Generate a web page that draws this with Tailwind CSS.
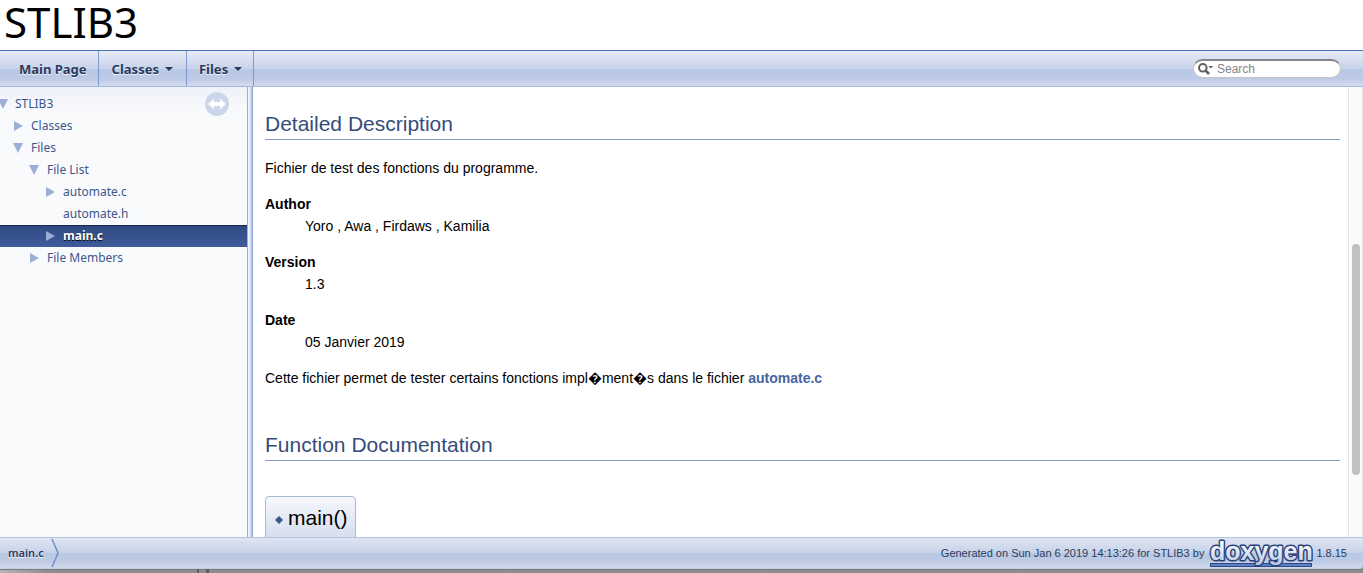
<!DOCTYPE html>
<html lang="en">
<head>
<meta charset="utf-8">
<title>STLIB3: main.c File Reference</title>
<script src="https://cdn.jsdelivr.net/npm/@tailwindcss/browser@4"></script>
</head>
<body class="flex h-screen flex-col overflow-hidden bg-white font-['Liberation_Sans',sans-serif] text-sm/[22px] text-black">
<header class="h-[50px] shrink-0 px-1">
  <h1 class="font-['Noto_Sans',sans-serif] text-[42px]/[44px]">STLIB3</h1>
</header>

<nav class="flex h-[37px] shrink-0 items-stretch border-t border-b border-t-[#4e6fb5] border-b-[#a6b9dc] bg-[linear-gradient(to_bottom,#e6eaf5,#c8d3ea_50%,#b9c8e5_53%,#bccae6_78%,#d3dbef)] font-['Noto_Sans',sans-serif] text-[13px] font-bold text-[#283a5d] [text-shadow:0_1px_1px_rgba(255,255,255,.9)]" aria-label="Main">
  <a href="#" class="flex items-center border-r border-[#7d9acb] pl-[19px] pr-[11px]">Main Page</a>
  <a href="#" class="flex items-center gap-1.5 border-r border-[#7d9acb] px-[13px]">Classes
    <svg class="h-1 w-2" viewBox="0 0 8 4" fill="#283a5d"><path d="M0 0h8L4 4z"/></svg></a>
  <a href="#" class="flex items-center gap-1.5 border-r border-[#7d9acb] pr-[11px] pl-3">Files
    <svg class="h-1 w-2" viewBox="0 0 8 4" fill="#283a5d"><path d="M0 0h8L4 4z"/></svg></a>
  <form class="my-auto mr-[22px] ml-auto flex h-[19px] w-[148px] items-center rounded-full border border-[#c4c4c4] border-t-2 border-t-[#858585] bg-white pl-1" onsubmit="return false">
    <svg class="h-3 w-4 shrink-0" viewBox="0 0 16 12" fill="none" stroke="#5f5f5f"><circle cx="4.8" cy="4.8" r="3.8" stroke-width="2"/><path d="M7.4 7.4L11 11" stroke-width="2.6"/><path d="M10.5 3h4.5L12.8 5.5z" fill="#5f5f5f" stroke="none"/></svg>
    <input type="text" aria-label="Search" placeholder="Search" class="ml-[3px] w-full min-w-0 bg-transparent font-['Liberation_Sans',sans-serif] text-xs/[15px] font-normal outline-none placeholder:text-[#858585]">
  </form>
</nav>

<div class="flex min-h-0 flex-1">
  <aside class="relative w-[247px] shrink-0 overflow-hidden bg-[#f9fafc] bg-linear-to-b from-[#eef1f9] to-[#f9fafc] to-[24px] pt-[6px] font-['Noto_Sans',sans-serif] text-xs/[22px] text-[#3d578c]">
    <button type="button" aria-label="Synchronise navigation" class="absolute top-[5px] right-[18px] size-6">
      <svg viewBox="0 0 24 24"><circle cx="12" cy="12" r="12" fill="#cbd6eb"/><path d="M3 12l6-5.5V10h6V6.500L21 12l-6 5.500V14H9v3.500z" fill="#fff"/></svg>
    </button>
    <ul>
      <li><a href="#" class="flex h-[22px] items-center gap-[7px]"><svg class="-ml-[2px] size-[10px]" viewBox="0 0 10 10" fill="#9caed8"><path d="M0 0h10L5 10z"/></svg>STLIB3</a></li>
      <li><a href="#" class="flex h-[22px] items-center gap-2 pl-[13px]"><svg class="size-[10px]" viewBox="0 0 10 10" fill="#9caed8"><path d="M1 0v10l9-5z"/></svg>Classes</a></li>
      <li><a href="#" class="flex h-[22px] items-center gap-2 pl-[13px]"><svg class="size-[10px]" viewBox="0 0 10 10" fill="#9caed8"><path d="M0 0h10L5 10z"/></svg>Files</a></li>
      <li><a href="#" class="flex h-[22px] items-center gap-2 pl-[29px]"><svg class="size-[10px]" viewBox="0 0 10 10" fill="#9caed8"><path d="M0 0h10L5 10z"/></svg>File List</a></li>
      <li><a href="#" class="flex h-[22px] items-center gap-2 pl-[45px]"><svg class="size-[10px]" viewBox="0 0 10 10" fill="#9caed8"><path d="M1 0v10l9-5z"/></svg>automate.c</a></li>
      <li><a href="#" class="flex h-[22px] items-center pl-[63px]">automate.h</a></li>
      <li><a href="#" aria-current="page" class="flex h-[22px] items-center gap-2 bg-linear-to-b from-[#2f4880] to-[#3f5c9c] pl-[45px] font-bold text-white shadow-[inset_0_1px_0_#1c2a4a] [text-shadow:0_1px_1px_#000]"><svg class="size-[10px]" viewBox="0 0 10 10" fill="#9caed8"><path d="M1 0v10l9-5z"/></svg>main.c</a></li>
      <li><a href="#" class="flex h-[22px] items-center gap-2 pl-[29px]"><svg class="size-[10px]" viewBox="0 0 10 10" fill="#9caed8"><path d="M1 0v10l9-5z"/></svg>File Members</a></li>
    </ul>
  </aside>
  <div class="w-[6px] shrink-0 border-x border-l-[#9caed8] border-r-[#8fa6d6] bg-linear-to-r from-white to-[#b4c3e2]"></div>

  <main class="min-w-0 flex-1 overflow-hidden pt-[25px] pr-2 pl-3">
    <h2 class="border-b border-[#879ecb] pb-[3px] text-[21px]/[24px] text-[#354c7b]">Detailed Description</h2>
    <p class="mt-[17px]">Fichier de test des fonctions du programme.</p>
    <dl class="mt-[14px]"><dt class="font-bold">Author</dt><dd class="ml-10">Yoro , Awa , Firdaws , Kamilia</dd></dl>
    <dl class="mt-[14px]"><dt class="font-bold">Version</dt><dd class="ml-10">1.3</dd></dl>
    <dl class="mt-[14px]"><dt class="font-bold">Date</dt><dd class="ml-10">05 Janvier 2019</dd></dl>
    <p class="mt-[14px]">Cette fichier permet de tester certains fonctions impl�ment�s dans le fichier <a href="#" class="font-bold text-[#4665a2]">automate.c</a></p>
    <h2 class="mt-11 border-b border-[#879ecb] pb-[3px] text-[21px]/[24px] text-[#354c7b]">Function Documentation</h2>
    <h3 class="mt-[35px] flex h-14 w-fit items-start gap-[5px] rounded-t border border-[#a8b8d9] bg-linear-to-b from-[#f6f8fc] to-[#d6deef] to-[40px] pr-[7px] pl-2 pt-[9px] text-[21px]/[24px]">
      <a href="#" aria-label="Link to main()" class="mt-[10px] ml-px"><svg class="size-2" viewBox="0 0 8 8" fill="#3d578c"><path d="M4 0l4 4-4 4-4-4z"/></svg></a>main()</h3>
  </main>
  <div class="w-[15px] shrink-0 border-x border-[#e6e6e6] bg-[#fafafa] pt-[157px]">
    <div class="ml-[3px] h-[231px] w-2 rounded-full bg-[#c1c1c1]"></div>
  </div>
</div>

<footer class="shrink-0 bg-linear-to-r from-[#b5b5b5] to-[#8c8c8c] to-[50px]">
  <div class="flex h-8 items-center justify-between rounded-br border-t border-b border-t-[#b4c3e0] border-b-[#c3cee6] bg-[linear-gradient(to_bottom,#dfe5f2,#c8d3e9_48%,#b9c7e3_52%,#bdcae4_75%,#d0d9ec)] text-[11px] text-[#2a3d61]">
    <a href="#" class="flex items-center gap-[7px] pl-2 font-['Noto_Sans',sans-serif] text-[11px] font-semibold text-[#283a5d] [text-shadow:0_1px_1px_rgba(255,255,255,.9)]">main.c
      <svg class="h-[30px] w-2" viewBox="0 0 8 30" fill="none" stroke="#7590cb" stroke-width="1.6"><path d="M1 1l6 14-6 14"/></svg></a>
    <p class="flex items-center gap-[3px] pr-4">Generated on Sun Jan 6 2019 14:13:26 for STLIB3 by
      <a href="#" aria-label="doxygen"><svg class="h-[30px] w-[106px]" viewBox="0 0 106 30">
        <defs><linearGradient id="logo" x1="0" y1="0" x2="0" y2="1"><stop offset=".2" stop-color="#fff"/><stop offset="1" stop-color="#b5c6e6"/></linearGradient></defs>
        <rect x="3.500" y="25.500" width="101" height="3" fill="#5b80c6" stroke="#2d4a86"/>
        <text x="3" y="22" font-family="Liberation Sans, sans-serif" font-weight="bold" font-size="25" fill="url(#logo)" stroke="#2b4378" stroke-width="3" stroke-linejoin="round" paint-order="stroke">doxygen</text></svg></a>
      1.8.15</p>
  </div>
  <div class="flex h-1 gap-[7px] pl-[197px] shadow-[inset_0_1px_0_#7b7b7b]"><span class="w-[2px] bg-[#5f5f5f]"></span><span class="w-[3px] bg-[#5f5f5f]"></span></div>
</footer>
</body>
</html>
